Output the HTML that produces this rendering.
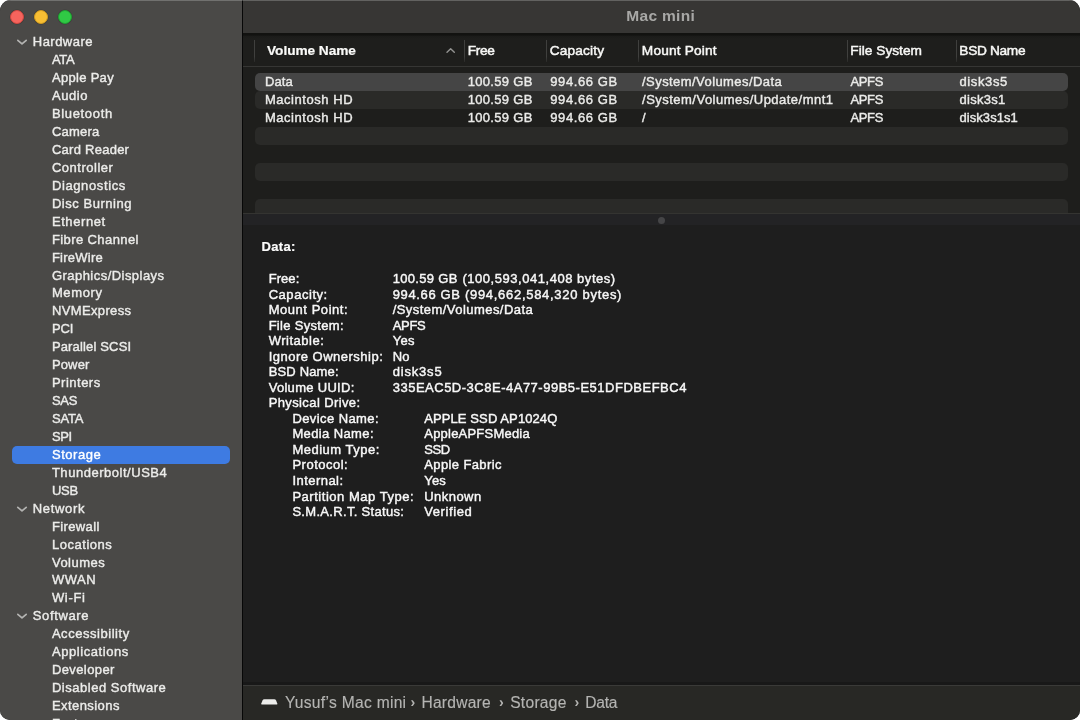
<!DOCTYPE html>
<html lang="en"><head><meta charset="utf-8"><title>Mac mini</title>
<style>
html,body{margin:0;padding:0;background:#fff;width:1080px;height:720px;overflow:hidden}
body{font-family:"Liberation Sans",sans-serif}
.win{will-change:transform;position:absolute;left:0;top:0;width:1080px;height:720px;border-radius:11px 11px 10px 10px;overflow:hidden;background:#1e1e1e}
.sidebar{position:absolute;left:0;top:0;width:242px;height:720px;background:#4a4947}
.topline{position:absolute;left:0;top:0;width:1080px;height:1px;background:rgba(255,255,255,.22)}
.divider{position:absolute;left:241.7px;top:0;width:1.5px;height:720px;background:#070707}
.tl{position:absolute;top:9.7px;width:14.4px;height:14.4px;box-shadow:0 0 0 .5px rgba(0,0,0,.18);border-radius:50%;box-sizing:border-box}
.chev{position:absolute;fill:none;stroke:#b4b4b2;stroke-width:1.7;stroke-linecap:round;stroke-linejoin:round}
.sel{position:absolute;left:12px;width:218px;height:18.3px;border-radius:5px;background:#3e7be2}
.titlebar{position:absolute;left:243px;top:0;width:837px;height:34px;background:#373634}
.tbline{position:absolute;left:243px;top:33.3px;width:837px;height:2.9px;background:linear-gradient(#121210 0,#121210 70%,#1a1a18 100%)}
.header{position:absolute;left:243px;top:36.2px;width:837px;height:29.8px;background:linear-gradient(#1b1b19 0,#1e1e1c 3px)}
.hline{position:absolute;left:243px;top:66px;width:837px;height:1px;background:#363634}
.tablebg{position:absolute;left:243px;top:67px;width:837px;height:147px;background:#1e1e1c}
.vs{position:absolute;top:40px;width:1px;height:22px;background:linear-gradient(#40403e 0,#40403e 75%,#2a2a28 100%)}
.trow{position:absolute;left:255px;width:812.5px;border-radius:5px}
.trow.alt{background:#2a2a28}
.trow.sel1{background:#454545}
.split1{position:absolute;left:243px;top:213px;width:837px;height:1px;background:#343431}
.split{position:absolute;left:243px;top:214px;width:837px;height:11px;background:#232325}
.dot{position:absolute;left:657.8px;top:216.5px;width:7px;height:7px;border-radius:50%;background:#454547}
.fline0{position:absolute;left:243px;top:682.4px;width:837px;height:2.6px;background:#181818}
.fline{position:absolute;left:243px;top:685px;width:837px;height:1.5px;background:#3a3a38}
.footer{position:absolute;left:243px;top:686px;width:837px;height:34px;background:#282825}

.tx{position:absolute;white-space:nowrap;height:18px;line-height:18px;font-size:13px}
.st{color:#ececea;-webkit-text-stroke:.4px #ececea}
.ssel{color:#fff;-webkit-text-stroke:.4px #fff}
.th{font-size:13.7px;color:#f8f8f6;-webkit-text-stroke:.48px #f8f8f6}
.th.b{font-weight:bold;-webkit-text-stroke:.2px #fafaf8;color:#fafaf8}
.tc{color:#ebebe9;-webkit-text-stroke:.4px #ebebe9}
.dtitle{font-weight:bold;color:#fbfbfb;-webkit-text-stroke:.2px #fbfbfb}
.dk{color:#f8f8f8;-webkit-text-stroke:.42px #f8f8f8}
.bc{font-size:15.6px;height:20px;line-height:20px;color:#b4b4b2;-webkit-text-stroke:.15px #b4b4b2}
.bc.sep{font-size:14px;font-weight:bold;-webkit-text-stroke:0}
.title{font-size:15.5px;height:20px;line-height:20px;font-weight:bold;color:#a8a8a6}

</style></head><body>
<div class="win">
<div class="sidebar">
<div class="tl" style="left:9.8px;background:#f6645d;border:.7px solid #cf4740"></div>
<div class="tl" style="left:33.6px;background:#f8be33;border:.7px solid #cf9a20"></div>
<div class="tl" style="left:57.6px;background:#30c945;border:.7px solid #1f9f31"></div>
<svg class="chev" style="left:15.9px;top:38.20px" width="12" height="8" viewBox="0 0 12 8"><path d="M1.8 2.3 L6 5.9 L10.2 2.3"/></svg>
<div class="sel" style="top:445.80px"></div>
<svg class="chev" style="left:15.9px;top:505.20px" width="12" height="8" viewBox="0 0 12 8"><path d="M1.8 2.3 L6 5.9 L10.2 2.3"/></svg>
<svg class="chev" style="left:15.9px;top:612.20px" width="12" height="8" viewBox="0 0 12 8"><path d="M1.8 2.3 L6 5.9 L10.2 2.3"/></svg>
</div>
<div class="divider"></div>
<div class="titlebar"></div>
<div class="tbline"></div>
<div class="header"></div>
<div class="hline"></div>
<div class="tablebg"></div>
<div class="vs" style="left:254px"></div>
<div class="vs" style="left:464px"></div>
<div class="vs" style="left:546px"></div>
<div class="vs" style="left:638px"></div>
<div class="vs" style="left:847px"></div>
<div class="vs" style="left:956px"></div>
<svg class="chev" style="left:445px;top:47px;stroke:#939391;stroke-width:1.4" width="11" height="8" viewBox="0 0 11 8"><path d="M2 5.3 L5.65 1.7 L9.3 5.3"/></svg>
<div class="trow sel1" style="top:73.0px;height:18px"></div>
<div class="trow alt" style="top:91.0px;height:18px"></div>
<div class="trow alt" style="top:127.0px;height:18px"></div>
<div class="trow alt" style="top:163.0px;height:18px"></div>
<div class="trow alt" style="top:199.0px;height:14px;border-radius:5px 5px 0 0"></div>
<div class="split1"></div>
<div class="split"></div>
<div class="dot"></div>
<div class="fline0"></div><div class="fline"></div>
<div class="footer"></div>
<svg style="position:absolute;left:261px;top:698.6px" width="17" height="6" viewBox="0 0 17 6"><path d="M3.4 0.2 H13.2 Q14.6 0.2 15.1 1.4 L16.2 4.2 V5.5 H0.4 V4.2 L1.5 1.4 Q2 0.2 3.4 0.2 Z" fill="#ededeb"/></svg>
<div class="tx st" style="left:32.78px;top:33.40px;letter-spacing:0.482px">Hardware</div>
<div class="tx st" style="left:51.92px;top:51.33px;letter-spacing:-0.245px">ATA</div>
<div class="tx st" style="left:51.92px;top:69.27px;letter-spacing:0.310px">Apple Pay</div>
<div class="tx st" style="left:51.92px;top:87.20px;letter-spacing:0.560px">Audio</div>
<div class="tx st" style="left:51.92px;top:105.14px;letter-spacing:0.664px">Bluetooth</div>
<div class="tx st" style="left:51.92px;top:123.07px;letter-spacing:0.203px">Camera</div>
<div class="tx st" style="left:51.92px;top:141.01px;letter-spacing:0.262px">Card Reader</div>
<div class="tx st" style="left:51.92px;top:158.94px;letter-spacing:0.513px">Controller</div>
<div class="tx st" style="left:51.92px;top:176.88px;letter-spacing:0.620px">Diagnostics</div>
<div class="tx st" style="left:51.92px;top:194.81px;letter-spacing:0.539px">Disc Burning</div>
<div class="tx st" style="left:51.92px;top:212.75px;letter-spacing:0.586px">Ethernet</div>
<div class="tx st" style="left:51.92px;top:230.69px;letter-spacing:0.405px">Fibre Channel</div>
<div class="tx st" style="left:51.92px;top:248.62px;letter-spacing:0.247px">FireWire</div>
<div class="tx st" style="left:51.92px;top:266.55px;letter-spacing:0.463px">Graphics/Displays</div>
<div class="tx st" style="left:51.92px;top:284.49px;letter-spacing:0.611px">Memory</div>
<div class="tx st" style="left:51.92px;top:302.42px;letter-spacing:0.367px">NVMExpress</div>
<div class="tx st" style="left:51.92px;top:320.36px;letter-spacing:-0.079px">PCI</div>
<div class="tx st" style="left:51.92px;top:338.29px;letter-spacing:0.154px">Parallel SCSI</div>
<div class="tx st" style="left:51.92px;top:356.23px;letter-spacing:0.149px">Power</div>
<div class="tx st" style="left:51.92px;top:374.16px;letter-spacing:0.500px">Printers</div>
<div class="tx st" style="left:51.92px;top:392.10px;letter-spacing:-0.230px">SAS</div>
<div class="tx st" style="left:51.92px;top:410.03px;letter-spacing:-0.171px">SATA</div>
<div class="tx st" style="left:51.92px;top:427.97px;letter-spacing:-0.396px">SPI</div>
<div class="tx st ssel" style="left:51.92px;top:445.90px;letter-spacing:0.555px">Storage</div>
<div class="tx st" style="left:51.92px;top:463.84px;letter-spacing:0.527px">Thunderbolt/USB4</div>
<div class="tx st" style="left:51.92px;top:481.77px;letter-spacing:-0.187px">USB</div>
<div class="tx st" style="left:32.78px;top:499.71px;letter-spacing:0.661px">Network</div>
<div class="tx st" style="left:51.92px;top:517.64px;letter-spacing:0.373px">Firewall</div>
<div class="tx st" style="left:51.92px;top:535.58px;letter-spacing:0.538px">Locations</div>
<div class="tx st" style="left:51.92px;top:553.51px;letter-spacing:0.517px">Volumes</div>
<div class="tx st" style="left:51.92px;top:571.45px;letter-spacing:0.522px">WWAN</div>
<div class="tx st" style="left:51.92px;top:589.38px;letter-spacing:0.695px">Wi-Fi</div>
<div class="tx st" style="left:32.78px;top:607.32px;letter-spacing:0.625px">Software</div>
<div class="tx st" style="left:51.92px;top:625.25px;letter-spacing:0.538px">Accessibility</div>
<div class="tx st" style="left:51.92px;top:643.19px;letter-spacing:0.574px">Applications</div>
<div class="tx st" style="left:51.92px;top:661.12px;letter-spacing:0.402px">Developer</div>
<div class="tx st" style="left:51.92px;top:679.06px;letter-spacing:0.527px">Disabled Software</div>
<div class="tx st" style="left:51.92px;top:696.99px;letter-spacing:0.434px">Extensions</div>
<div class="tx st" style="left:51.92px;top:714.93px;letter-spacing:-0.099px">Fonts</div>
<div class="tx th b" style="left:267.03px;top:42.00px;letter-spacing:-0.054px">Volume Name</div>
<div class="tx th" style="left:467.86px;top:42.00px;letter-spacing:-0.387px">Free</div>
<div class="tx th" style="left:549.79px;top:42.00px;letter-spacing:0.134px">Capacity</div>
<div class="tx th" style="left:641.86px;top:42.00px;letter-spacing:0.165px">Mount Point</div>
<div class="tx th" style="left:850.36px;top:42.00px;letter-spacing:0.007px">File System</div>
<div class="tx th" style="left:959.36px;top:42.00px;letter-spacing:-0.324px">BSD Name</div>
<div class="tx tc" style="left:264.88px;top:73.00px;letter-spacing:0.129px">Data</div>
<div class="tx tc" style="left:467.65px;top:73.00px;letter-spacing:0.330px">100.59 GB</div>
<div class="tx tc" style="left:550.27px;top:73.00px;letter-spacing:0.596px">994.66 GB</div>
<div class="tx tc" style="left:642.05px;top:73.00px;letter-spacing:0.433px">/System/Volumes/Data</div>
<div class="tx tc" style="left:850.52px;top:73.00px;letter-spacing:-0.387px">APFS</div>
<div class="tx tc" style="left:959.52px;top:73.00px;letter-spacing:0.617px">disk3s5</div>
<div class="tx tc" style="left:264.88px;top:91.00px;letter-spacing:0.557px">Macintosh HD</div>
<div class="tx tc" style="left:467.65px;top:91.00px;letter-spacing:0.330px">100.59 GB</div>
<div class="tx tc" style="left:550.27px;top:91.00px;letter-spacing:0.596px">994.66 GB</div>
<div class="tx tc" style="left:642.05px;top:91.00px;letter-spacing:0.480px">/System/Volumes/Update/mnt1</div>
<div class="tx tc" style="left:850.52px;top:91.00px;letter-spacing:-0.387px">APFS</div>
<div class="tx tc" style="left:959.52px;top:91.00px;letter-spacing:0.277px">disk3s1</div>
<div class="tx tc" style="left:264.88px;top:109.00px;letter-spacing:0.557px">Macintosh HD</div>
<div class="tx tc" style="left:467.65px;top:109.00px;letter-spacing:0.330px">100.59 GB</div>
<div class="tx tc" style="left:550.27px;top:109.00px;letter-spacing:0.596px">994.66 GB</div>
<div class="tx tc" style="left:642.05px;top:109.00px">/</div>
<div class="tx tc" style="left:850.52px;top:109.00px;letter-spacing:-0.387px">APFS</div>
<div class="tx tc" style="left:959.52px;top:109.00px;letter-spacing:0.055px">disk3s1s1</div>
<div class="tx dtitle" style="left:261.53px;top:237.60px;letter-spacing:0.355px">Data:</div>
<div class="tx dk" style="left:268.63px;top:270.10px;letter-spacing:0.077px">Free:</div>
<div class="tx dk" style="left:392.70px;top:270.10px;letter-spacing:0.322px">100.59 GB</div>
<div class="tx dk" style="left:462.43px;top:270.10px;letter-spacing:0.538px">(100,593,041,408 bytes)</div>
<div class="tx dk" style="left:268.63px;top:285.63px;letter-spacing:0.551px">Capacity:</div>
<div class="tx dk" style="left:392.70px;top:285.63px;letter-spacing:0.634px">994.66 GB</div>
<div class="tx dk" style="left:464.93px;top:285.63px;letter-spacing:0.708px">(994,662,584,320 bytes)</div>
<div class="tx dk" style="left:268.63px;top:301.16px;letter-spacing:0.545px">Mount Point:</div>
<div class="tx dk" style="left:392.70px;top:301.16px;letter-spacing:0.448px">/System/Volumes/Data</div>
<div class="tx dk" style="left:268.63px;top:316.69px;letter-spacing:0.306px">File System:</div>
<div class="tx dk" style="left:392.70px;top:316.69px;letter-spacing:-0.284px">APFS</div>
<div class="tx dk" style="left:268.63px;top:332.22px;letter-spacing:0.519px">Writable:</div>
<div class="tx dk" style="left:392.70px;top:332.22px;letter-spacing:0.334px">Yes</div>
<div class="tx dk" style="left:268.63px;top:347.75px;letter-spacing:0.494px">Ignore Ownership:</div>
<div class="tx dk" style="left:392.70px;top:347.75px;letter-spacing:0.263px">No</div>
<div class="tx dk" style="left:268.63px;top:363.28px;letter-spacing:0.171px">BSD Name:</div>
<div class="tx dk" style="left:392.70px;top:363.28px;letter-spacing:0.810px">disk3s5</div>
<div class="tx dk" style="left:268.63px;top:378.81px;letter-spacing:0.301px">Volume UUID:</div>
<div class="tx dk" style="left:392.70px;top:378.81px;letter-spacing:0.505px">335EAC5D-3C8E-4A77-99B5-E51DFDBEFBC4</div>
<div class="tx dk" style="left:268.63px;top:394.34px;letter-spacing:0.392px">Physical Drive:</div>
<div class="tx dk" style="left:292.38px;top:409.87px;letter-spacing:0.420px">Device Name:</div>
<div class="tx dk" style="left:424.26px;top:409.87px;letter-spacing:0.095px">APPLE SSD AP1024Q</div>
<div class="tx dk" style="left:292.38px;top:425.40px;letter-spacing:0.381px">Media Name:</div>
<div class="tx dk" style="left:424.26px;top:425.40px;letter-spacing:0.217px">AppleAPFSMedia</div>
<div class="tx dk" style="left:292.38px;top:440.93px;letter-spacing:0.505px">Medium Type:</div>
<div class="tx dk" style="left:424.26px;top:440.93px;letter-spacing:-0.376px">SSD</div>
<div class="tx dk" style="left:292.38px;top:456.46px;letter-spacing:0.507px">Protocol:</div>
<div class="tx dk" style="left:424.26px;top:456.46px;letter-spacing:0.386px">Apple Fabric</div>
<div class="tx dk" style="left:292.38px;top:471.99px;letter-spacing:0.468px">Internal:</div>
<div class="tx dk" style="left:424.26px;top:471.99px;letter-spacing:0.181px">Yes</div>
<div class="tx dk" style="left:292.38px;top:487.52px;letter-spacing:0.527px">Partition Map Type:</div>
<div class="tx dk" style="left:424.26px;top:487.52px;letter-spacing:0.459px">Unknown</div>
<div class="tx dk" style="left:292.38px;top:503.05px;letter-spacing:0.318px">S.M.A.R.T. Status:</div>
<div class="tx dk" style="left:424.26px;top:503.05px;letter-spacing:0.591px">Verified</div>
<div class="tx bc" style="left:284.96px;top:692.50px;letter-spacing:0.273px">Yusuf’s Mac mini</div>
<div class="tx bc sep" style="left:410.39px;top:691.90px">›</div>
<div class="tx bc" style="left:421.46px;top:692.50px;letter-spacing:0.228px">Hardware</div>
<div class="tx bc sep" style="left:498.89px;top:691.90px">›</div>
<div class="tx bc" style="left:510.20px;top:692.50px;letter-spacing:0.267px">Storage</div>
<div class="tx bc sep" style="left:574.39px;top:691.90px">›</div>
<div class="tx bc" style="left:585.21px;top:692.50px;letter-spacing:-0.202px">Data</div>
<div class="tx title" style="left:626.28px;top:5.90px;letter-spacing:0.323px">Mac mini</div>
<div class="topline"></div>
</div>
</body></html>
